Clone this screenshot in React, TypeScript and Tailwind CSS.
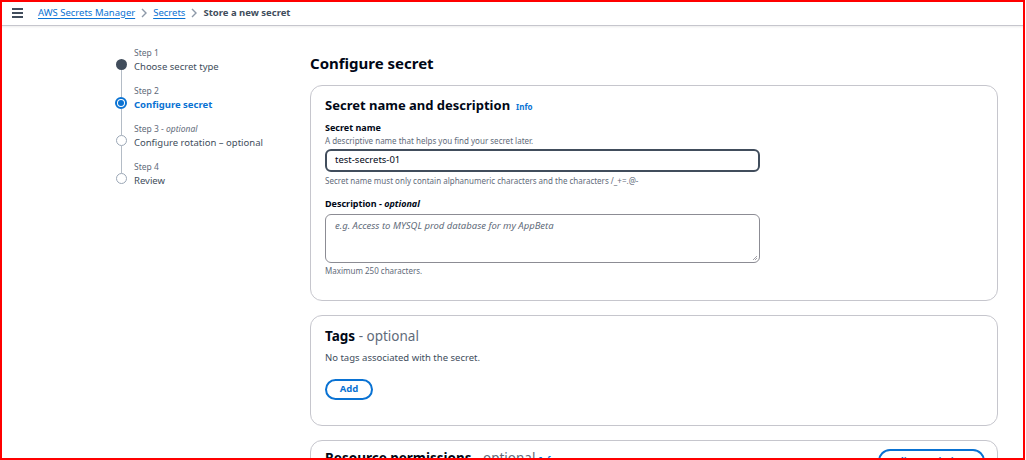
import { Fragment } from "react"

const font = { fontFamily: '"Noto Sans", "Open Sans", Arial, sans-serif' }

type Step = { label: string; optional?: boolean; title: string; state: "done" | "current" | "todo" }

const steps: Step[] = [
  { label: "Step 1", title: "Choose secret type", state: "done" },
  { label: "Step 2", title: "Configure secret", state: "current" },
  { label: "Step 3", optional: true, title: "Configure rotation – optional", state: "todo" },
  { label: "Step 4", title: "Review", state: "todo" },
]

function StepDot({ state }: { state: Step["state"] }) {
  if (state === "done") return <div className="w-[11px] h-[11px] rounded-full bg-[#414d5c]" />
  if (state === "current")
    return (
      <div className="w-[12px] h-[12px] rounded-full border-2 border-[#0972d3] flex items-center justify-center">
        <div className="w-[6px] h-[6px] rounded-full bg-[#0972d3]" />
      </div>
    )
  return <div className="w-[11px] h-[11px] rounded-full border border-[#9ba7b6] bg-white" />
}

function Stepper() {
  return (
    <div className="flex flex-col">
      {steps.map((s, i) => (
        <div key={s.label} className="flex flex-row">
          {/* 左侧圆点与竖线 */}
          <div className="w-[12px] flex flex-col items-center">
            <div className={"h-[14px] w-px " + (i === 0 ? "" : "bg-[#b4bcc6]")} />
            <StepDot state={s.state} />
            <div className={"flex-1 w-px " + (i === steps.length - 1 ? "" : "bg-[#b4bcc6]")} />
          </div>
          <div className="pl-[7px] pb-[9px]">
            <div className="h-[15px] text-[8.5px] leading-[15px] text-[#5f6b7a]">
              {s.label}
              {s.optional && (
                <Fragment>
                  {" - "}
                  <span className="italic">optional</span>
                </Fragment>
              )}
            </div>
            <div
              className={
                "text-[9.5px] leading-[14px] " +
                (s.state === "current" ? "font-bold text-[#0972d3]" : "text-[#414d5c]")
              }
            >
              {s.title}
            </div>
          </div>
        </div>
      ))}
    </div>
  )
}

function Card({ children, className = "" }: { children: React.ReactNode; className?: string }) {
  return (
    <div className={"rounded-[12px] border border-[#c6c6cd] bg-white px-[14px] " + className}>{children}</div>
  )
}

export default function App() {
  return (
    <div className="w-[1025px] h-[460px] overflow-hidden bg-white text-[#000716] relative" style={font}>
      {/* 顶部面包屑 */}
      <div className="h-[26px] border-b border-[#c6c6cd] shadow-[0_1px_2px_rgba(0,0,0,0.08)] flex items-center">
        <div className="pl-[12px] pr-[15px] flex flex-col gap-[2px]">
          <div className="w-[11px] h-[2px] bg-[#414d5c]" />
          <div className="w-[11px] h-[2px] bg-[#414d5c]" />
          <div className="w-[11px] h-[2px] bg-[#414d5c]" />
        </div>
        <div className="flex items-center text-[9.5px] leading-[14px]">
          <span className="text-[#0972d3] underline underline-offset-2">AWS Secrets Manager</span>
          <svg width="8" height="10" viewBox="0 0 8 10" className="mx-[5px]">
            <path d="M2 1l4 4-4 4" fill="none" stroke="#8d99a8" strokeWidth="1.4" />
          </svg>
          <span className="text-[#0972d3] underline underline-offset-2">Secrets</span>
          <svg width="8" height="10" viewBox="0 0 8 10" className="mx-[5px]">
            <path d="M2 1l4 4-4 4" fill="none" stroke="#8d99a8" strokeWidth="1.4" />
          </svg>
          <span className="font-bold text-[#414d5c]">Store a new secret</span>
        </div>
      </div>

      <div className="flex flex-row">
        {/* 左侧步骤 */}
        <div className="w-[310px] pl-[115px] pt-[19px] shrink-0">
          <Stepper />
        </div>

        {/* 主内容 */}
        <div className="w-[688px] pt-[26px]">
          <h1 className="text-[15px] leading-[22px] font-bold mb-[11px]">Configure secret</h1>

          <Card className="h-[216px] pt-[9px]">
            <div className="flex items-baseline gap-[6px] h-[20px]">
              <h2 className="text-[13px] leading-[20px] font-bold">Secret name and description</h2>
              <span className="text-[8px] font-bold text-[#0972d3]">Info</span>
            </div>
            <div className="mt-[6px] text-[9px] leading-[14px] font-bold">Secret name</div>
            <div className="text-[8px] leading-[11px] text-[#5f6b7a]">
              A descriptive name that helps you find your secret later.
            </div>
            <div className="mt-[3px] w-[435px] h-[23px] rounded-[6px] border-2 border-[#414d5c] px-[8px] flex items-center text-[9.5px]">
              test-secrets-01
            </div>
            <div className="mt-[3px] text-[8px] leading-[11px] text-[#5f6b7a]">
              Secret name must only contain alphanumeric characters and the characters /_+=.@-
            </div>
            <div className="mt-[11px] text-[9px] leading-[14px] font-bold">
              Description - <span className="italic">optional</span>
            </div>
            <div className="mt-[3px] w-[435px] h-[49px] rounded-[6px] border border-[#8c8c94] px-[9px] pt-[4px] relative text-[9.5px] italic text-[#5f6b7a]">
              e.g. Access to MYSQL prod database for my AppBeta
              <svg width="6" height="6" viewBox="0 0 6 6" className="absolute right-[1px] bottom-[1px]">
                <path d="M5 1L1 5M5 3L3 5" stroke="#8c8c94" strokeWidth="0.8" />
              </svg>
            </div>
            <div className="mt-[2px] text-[8px] leading-[11px] text-[#5f6b7a]">Maximum 250 characters.</div>
          </Card>

          <Card className="mt-[14px] h-[111px] pt-[10px]">
            <h2 className="text-[13.5px] leading-[20px] font-bold">
              Tags <span className="font-normal text-[#5f6b7a]">- optional</span>
            </h2>
            <div className="mt-[5px] text-[9.5px] leading-[14px] text-[#414d5c]">
              No tags associated with the secret.
            </div>
            <button className="mt-[14px] w-[48px] h-[21px] rounded-full border-2 border-[#0972d3] text-[9.5px] font-bold text-[#0972d3]">
              Add
            </button>
          </Card>

          <Card className="mt-[14px] h-[60px] pt-[7px] flex flex-row justify-between items-start pr-[12px]">
            <h2 className="text-[13.5px] leading-[20px] font-bold">
              Resource permissions <span className="font-normal text-[#5f6b7a]">- optional</span>{" "}
              <span className="text-[8px] text-[#0972d3]">Info</span>
            </h2>
            <button className="mt-[1px] w-[107px] h-[24px] rounded-full border-2 border-[#0972d3] text-[9.5px] font-bold text-[#0972d3]">
              Edit permissions
            </button>
          </Card>
        </div>
      </div>

      {/* 红色外框 */}
      <div className="absolute inset-0 border-2 border-[#ff0000] pointer-events-none" />
    </div>
  )
}
